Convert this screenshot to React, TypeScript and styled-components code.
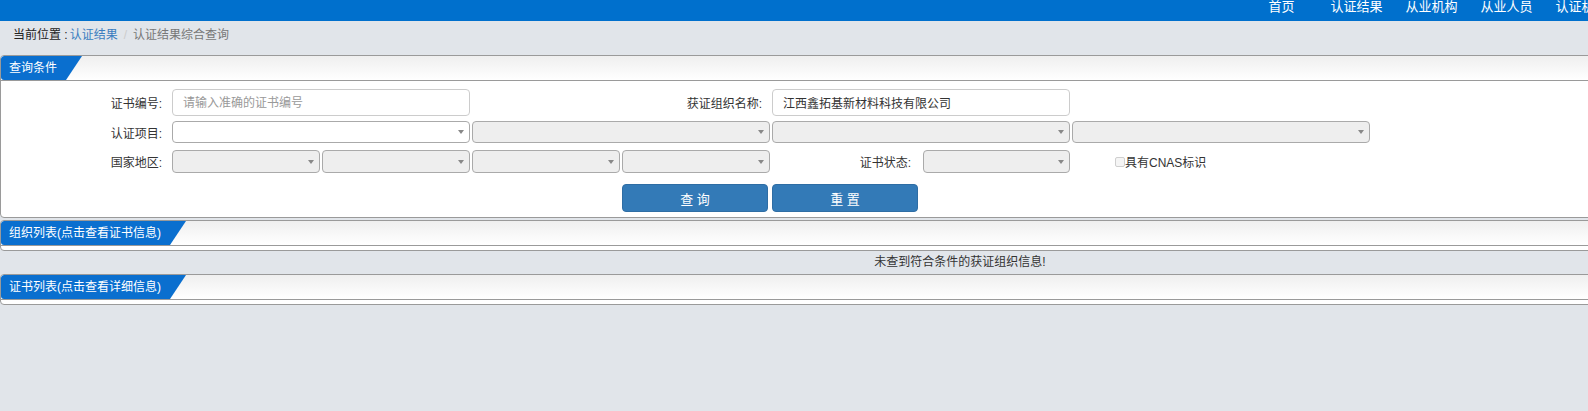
import React from "react";
import styled, { createGlobalStyle } from "styled-components";

const GlobalStyle = createGlobalStyle`
  html, body {
    margin: 0;
    padding: 0;
    background: #e1e5ea;
    overflow: hidden;
  }
  body {
    font-family: "Liberation Sans", "Noto Sans CJK SC", sans-serif;
    font-size: 12px;
    color: #333;
  }
`;

const Page = styled.div`
  width: 1920px;
`;

// top blue bar with the menu
const TopBar = styled.header`
  height: 21px;
  background: #0070cd;
  display: flex;
  overflow: hidden;
`;

const Nav = styled.ul`
  list-style: none;
  margin: 0 0 0 1244px;
  padding: 0;
  display: flex;
`;

const NavItem = styled.li`
  width: 75px;
  text-align: center;
  color: #fff;
  font-size: 13px;
  line-height: 14px;
  white-space: nowrap;
`;

const Crumbs = styled.div`
  height: 34px;
  box-sizing: border-box;
  padding: 6px 13px 0;
  line-height: 17px;
`;

const Here = styled.span`
  color: #222;
`;

const CrumbLink = styled.a`
  color: #3a7dbf;
  text-decoration: none;
  margin-left: 2px;
`;

const Sep = styled.span`
  color: #ccc;
  padding: 0 6px;
`;

const Current = styled.span`
  color: #777;
`;

const Panel = styled.section`
  border: 1px solid #9a9a9a;
  border-radius: 4px;
  background: #fff;
  overflow: hidden;

  & + & {
    margin-top: 2px;
  }
`;

const PanelHead = styled.div`
  height: 24px;
  display: flex;
  background: linear-gradient(#efefef, #fff);
  border-bottom: 1px solid #9a9a9a;
`;

const Tab = styled.h3`
  margin: 0;
  font-size: 12px;
  font-weight: normal;
  color: #fff;
  background: #0a6fcf;
  line-height: 24px;
  padding: 0 25px 0 8px;
  border-radius: 3px 0 0 3px;
  clip-path: polygon(0 0, 100% 0, calc(100% - 16px) 100%, 0 100%);
  white-space: nowrap;
`;

const EmptyBody = styled.div`
  height: 4px;
`;

const FormBody = styled.div`
  padding: 8px 0 5px;
`;

const Row = styled.div<{ $h: number; $mt?: number }>`
  display: grid;
  grid-template-columns: 171px repeat(4, 300px);
  height: ${(p) => p.$h}px;
  margin-top: ${(p) => p.$mt ?? 0}px;
`;

const Label = styled.label<{ $w?: number }>`
  display: flex;
  align-items: center;
  justify-content: flex-end;
  padding-right: 10px;
  box-sizing: border-box;
  width: ${(p) => (p.$w ? `${p.$w}px` : "auto")};
  white-space: nowrap;
`;

const Cell = styled.div`
  display: flex;
  gap: 2px;
  width: 298px;
`;

const TextInput = styled.input`
  width: 298px;
  height: 100%;
  box-sizing: border-box;
  border: 1px solid #ccc;
  border-radius: 4px;
  padding: 0 10px;
  font: inherit;
  color: #333;
  outline: none;

  &::placeholder {
    color: #999;
  }
`;

const FakeSelect = styled.div<{ $w: number; $off?: boolean }>`
  position: relative;
  width: ${(p) => p.$w}px;
  height: 100%;
  box-sizing: border-box;
  border: 1px solid #aaa;
  border-radius: 4px;
  background: ${(p) => (p.$off ? "#eee" : "#fff")};

  &::after {
    content: "";
    position: absolute;
    right: 5px;
    top: 50%;
    margin-top: -2px;
    border-left: 3px solid transparent;
    border-right: 3px solid transparent;
    border-top: 4px solid #888;
  }
`;

const CheckCell = styled.label`
  display: flex;
  align-items: center;
  padding-left: 43px;
`;

const Check = styled.span`
  width: 10px;
  height: 10px;
  box-sizing: border-box;
  border: 1px solid #cfcfcf;
  border-radius: 2px;
  background: #f5f5f5;
`;

const Buttons = styled.div`
  grid-column: 2 / 6;
  display: flex;
  justify-content: center;
  gap: 4px;
  padding-right: 4px;
`;

const Button = styled.button`
  width: 146px;
  height: 28px;
  background: #337ab7;
  border: 1px solid #2e6da4;
  border-radius: 4px;
  color: #fff;
  font-family: "Liberation Sans", "Noto Sans CJK SC", sans-serif;
  font-size: 13px;
  padding: 0;
  cursor: pointer;
`;

const Message = styled.div`
  height: 23px;
  line-height: 23px;
  text-align: center;
  color: #333;
`;

const navs = ["首页", "认证结果", "从业机构", "从业人员", "认证机构"];

export default function App() {
  return (
    <Page>
      <GlobalStyle />
      <TopBar>
        <Nav>
          {navs.map((n) => (
            <NavItem key={n}>{n}</NavItem>
          ))}
        </Nav>
      </TopBar>

      <Crumbs>
        <Here>当前位置 :</Here>
        <CrumbLink href="#">认证结果</CrumbLink>
        <Sep>/</Sep>
        <Current>认证结果综合查询</Current>
      </Crumbs>

      <Panel>
        <PanelHead>
          <Tab>查询条件</Tab>
        </PanelHead>
        <FormBody>
          <Row $h={27}>
            <Label>证书编号:</Label>
            <Cell>
              <TextInput placeholder="请输入准确的证书编号" />
            </Cell>
            <Label>获证组织名称:</Label>
            <Cell>
              <TextInput defaultValue="江西鑫拓基新材料科技有限公司" />
            </Cell>
          </Row>
          <Row $h={22} $mt={5}>
            <Label>认证项目:</Label>
            <Cell>
              <FakeSelect $w={298} />
            </Cell>
            <Cell>
              <FakeSelect $w={298} $off />
            </Cell>
            <Cell>
              <FakeSelect $w={298} $off />
            </Cell>
            <Cell>
              <FakeSelect $w={298} $off />
            </Cell>
          </Row>
          <Row $h={23} $mt={7}>
            <Label>国家地区:</Label>
            <Cell>
              <FakeSelect $w={148} $off />
              <FakeSelect $w={148} $off />
            </Cell>
            <Cell>
              <FakeSelect $w={148} $off />
              <FakeSelect $w={148} $off />
            </Cell>
            <Cell>
              <Label $w={150}>证书状态:</Label>
              <FakeSelect $w={148} $off />
            </Cell>
            <CheckCell>
              <Check />
              具有CNAS标识
            </CheckCell>
          </Row>
          <Row $h={28} $mt={11}>
            <Buttons>
              <Button type="button">查 询</Button>
              <Button type="button">重 置</Button>
            </Buttons>
          </Row>
        </FormBody>
      </Panel>

      <Panel>
        <PanelHead>
          <Tab>组织列表(点击查看证书信息)</Tab>
        </PanelHead>
        <EmptyBody />
      </Panel>
      <Message>未查到符合条件的获证组织信息!</Message>
      <Panel>
        <PanelHead>
          <Tab>证书列表(点击查看详细信息)</Tab>
        </PanelHead>
        <EmptyBody />
      </Panel>
    </Page>
  );
}
